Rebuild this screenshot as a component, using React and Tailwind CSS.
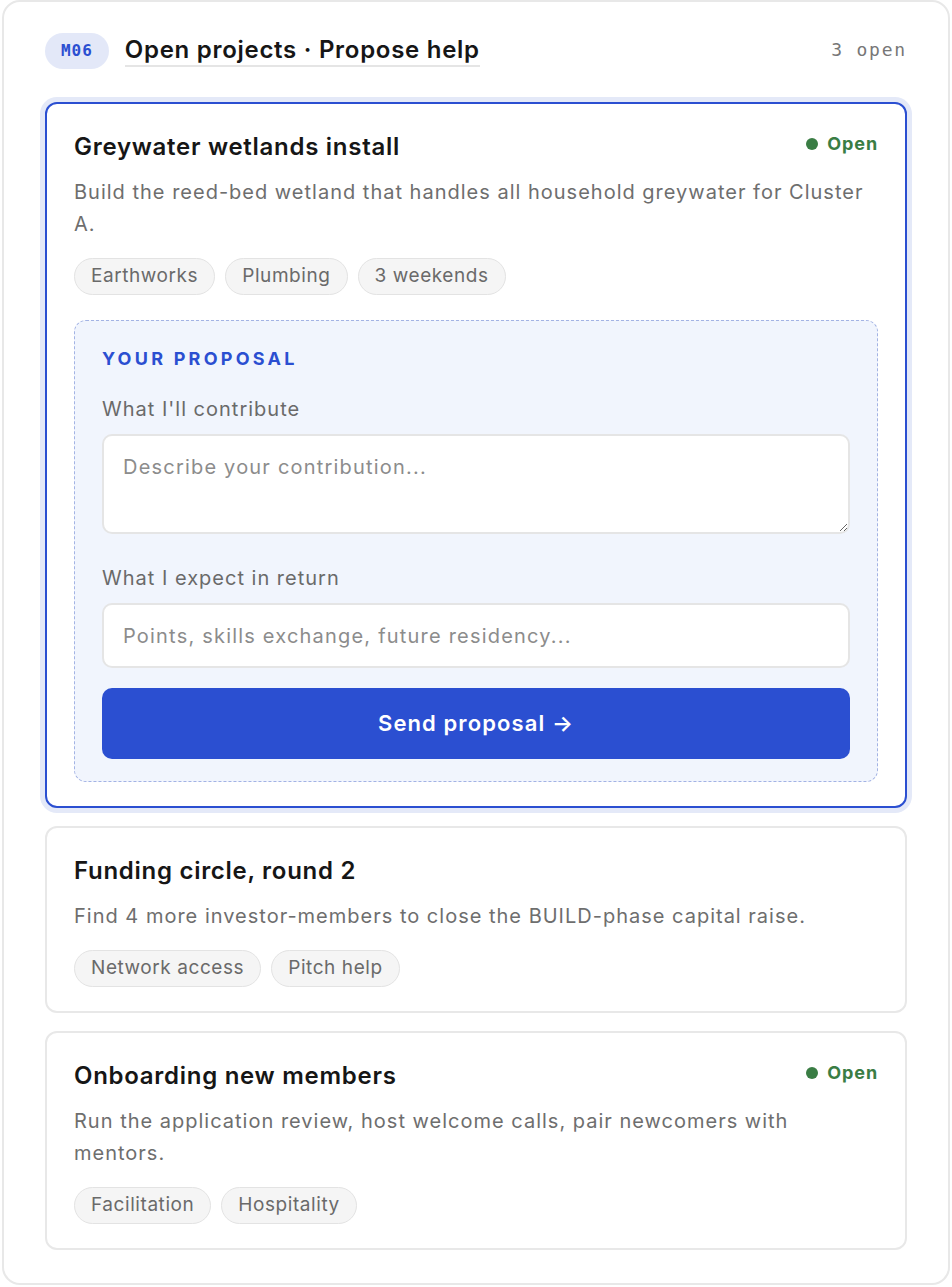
import React from "react";

const sans = { fontFamily: "Inter, 'Noto Sans', sans-serif" };
const mono = { fontFamily: "'DejaVu Sans Mono', 'Liberation Mono', monospace" };

const projects = [
  {
    id: 1,
    title: "Greywater wetlands install",
    desc: "Build the reed-bed wetland that handles all household greywater for Cluster A.",
    tags: ["Earthworks", "Plumbing", "3 weekends"],
    open: true,
    active: true,
  },
  {
    id: 2,
    title: "Funding circle, round 2",
    desc: "Find 4 more investor-members to close the BUILD-phase capital raise.",
    tags: ["Network access", "Pitch help"],
    open: false,
  },
  {
    id: 3,
    title: "Onboarding new members",
    desc: "Run the application review, host welcome calls, pair newcomers with mentors.",
    tags: ["Facilitation", "Hospitality"],
    open: true,
  },
];

const Tag = ({ label }) => (
  <span className="inline-flex items-center h-[37px] px-[16px] rounded-full bg-[#f5f5f5] border border-[#e3e3e3] text-[19px] tracking-[0.03em] text-[#6a6a6a]">
    {label}
  </span>
);

const ProposalForm = () => (
  <div className="mt-[25px] rounded-[12px] border-[1.5px] border-dashed border-[#a3b3e4] bg-[#f1f5fd] px-[27px] pt-[26px] pb-[22px]">
    <div className="text-[18px] leading-[24px] font-bold tracking-[0.18em] text-[#2b4fd1]">
      YOUR PROPOSAL
    </div>
    <label className="block mt-[25px] text-[20px] leading-[26px] tracking-[0.05em] text-[#6a6a6a]">
      What I'll contribute
    </label>
    <textarea
      placeholder="Describe your contribution..."
      className="block mt-[12px] w-full h-[100px] rounded-[10px] border-2 border-[#e5e5e5] bg-white px-[19px] pt-[18px] text-[20px] leading-[26px] tracking-[0.06em] text-[#222] placeholder:text-[#8c8c8c] outline-none"
      style={sans}
    />
    <label className="block mt-[31px] text-[20px] leading-[26px] tracking-[0.05em] text-[#6a6a6a]">
      What I expect in return
    </label>
    <input
      placeholder="Points, skills exchange, future residency..."
      className="block mt-[12px] w-full h-[65px] rounded-[10px] border-2 border-[#e5e5e5] bg-white px-[19px] text-[20px] tracking-[0.06em] text-[#222] placeholder:text-[#8c8c8c] outline-none"
      style={sans}
    />
    <button
      className="mt-[20px] w-full h-[71px] rounded-[10px] bg-[#2b4fd1] text-white text-[22px] font-semibold tracking-[0.05em]"
      style={sans}
    >
      Send proposal →
    </button>
  </div>
);

const ProjectCard = ({ p }) => (
  <div
    className={`rounded-[12px] bg-white px-[27px] pt-[28px] pb-[24px] ${
      p.active
        ? "border-2 border-[#2b4fd1] ring-[5px] ring-[#e4e9f8]"
        : "border-2 border-[#e8e8e8]"
    }`}
  >
    <div className="flex items-start justify-between">
      <h3 className="text-[24px] leading-[30px] font-semibold tracking-[0.03em] text-[#161616]">
        {p.title}
      </h3>
      {p.open && (
        <div className="flex items-center gap-[9px] text-[18px] leading-[24px] font-bold tracking-[0.05em] text-[#3a7d44]">
          <span className="w-[12px] h-[12px] rounded-full bg-[#3a7d44]" />
          Open
        </div>
      )}
    </div>
    <p className="mt-[14px] text-[20px] leading-[32px] tracking-[0.05em] text-[#6e6e6e]">
      {p.desc}
    </p>
    <div className="mt-[18px] flex gap-[10px]">
      {p.tags.map((t) => (
        <Tag key={t} label={t} />
      ))}
    </div>
    {p.active && <ProposalForm />}
  </div>
);

export default function App() {
  return (
    <div className="bg-white min-h-[1287px]" style={sans}>
      <div className="ml-[2px] w-[948px] h-[1285px] rounded-[18px] border-2 border-[#e8e8e8] px-[41px] pt-[31px]">
        {/* header */}
        <div className="flex items-center justify-between h-[36px]">
          <div className="flex items-center gap-[16px]">
            <span
              className="inline-flex items-center h-[36px] px-[16px] rounded-full bg-[#e3e8f8] text-[16px] font-bold tracking-[0.06em] text-[#2b4fd1]"
              style={mono}
            >
              M06
            </span>
            <span className="text-[24px] leading-[30px] font-semibold tracking-[0.03em] text-[#161616] border-b-2 border-[#e5e5e5]">
              Open projects · Propose help
            </span>
          </div>
          <span className="mb-[4px] text-[18px] tracking-[0.1em] text-[#777]" style={mono}>
            3 open
          </span>
        </div>

        {/* project list */}
        <div className="mt-[33px] flex flex-col gap-[18px]">
          {projects.map((p) => (
            <ProjectCard key={p.id} p={p} />
          ))}
        </div>
      </div>
    </div>
  );
}
